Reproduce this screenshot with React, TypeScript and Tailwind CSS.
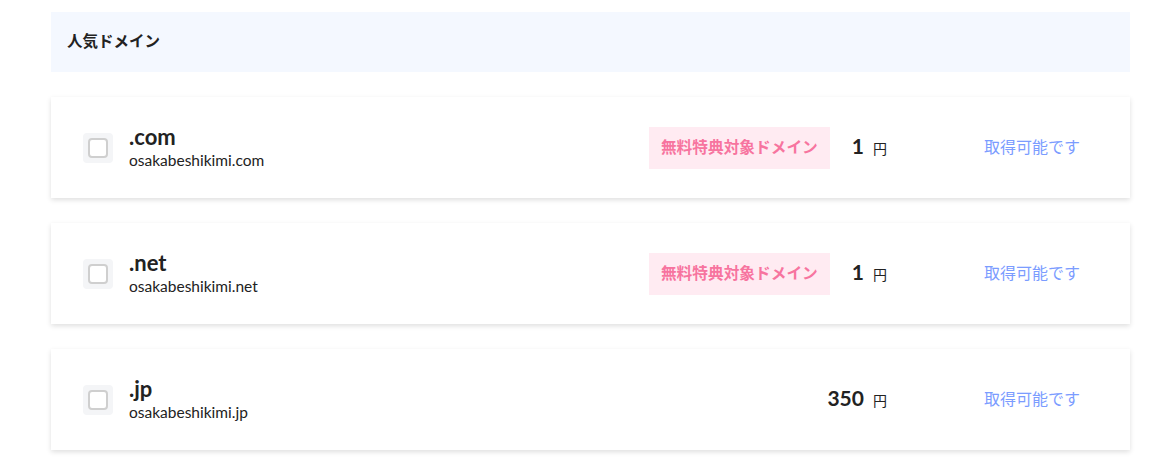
import { useState } from 'react'

type Domain = {
  tld: string
  name: string
  price: string
  free: boolean
}

const domains: Domain[] = [
  { tld: '.com', name: 'osakabeshikimi.com', price: '1', free: true },
  { tld: '.net', name: 'osakabeshikimi.net', price: '1', free: true },
  { tld: '.jp', name: 'osakabeshikimi.jp', price: '350', free: false },
]

function DomainRow({ d }: { d: Domain }) {
  const [checked, setChecked] = useState(false)
  return (
    <div className="flex h-[101px] items-center bg-white pl-8 pr-[50px] shadow-[0_2px_5px_rgba(0,0,0,0.13)]">
      {/* チェックボックス */}
      <button
        onClick={() => setChecked(!checked)}
        aria-label={d.tld}
        className="flex h-[30px] w-[30px] shrink-0 items-center justify-center rounded-[4px] bg-[#f4f5f7]"
      >
        <span
          className={`block h-[20px] w-[20px] rounded-[4px] border-2 ${checked ? 'border-[#7b9cff] bg-[#7b9cff]' : 'border-[#cfcfcf] bg-white'}`}
        />
      </button>
      <div className="ml-4 flex flex-1 flex-col pb-[2px]">
        <span className="text-[22px] font-bold leading-[25px] text-[#222]">{d.tld}</span>
        <span className="mt-[2px] text-[15.5px] leading-[19px] text-[#222]">{d.name}</span>
      </div>
      {d.free && (
        <span className="flex h-[42px] items-center bg-[#ffebf2] px-[12px] text-[15.7px] font-bold text-[#f7749f]">
          無料特典対象ドメイン
        </span>
      )}
      <div className="ml-[22px] flex items-baseline pb-[4px]">
        <span className="text-[21px] font-bold text-[#222]">{d.price}</span>
        <span className="ml-[9px] text-[14px] text-[#222]">円</span>
      </div>
      <span className="ml-[97px] pb-[2px] text-[16px] text-[#7b9cff]">取得可能です</span>
    </div>
  )
}

export default function App() {
  return (
    <div
      className="bg-white pl-[51px] pr-[30px] pt-[12px] pb-[18px]"
      style={{ fontFamily: 'Lato, "Noto Sans CJK JP", sans-serif' }}
    >
      <div className="flex h-[60px] items-center bg-[#f4f8ff] px-4">
        <span className="text-[15.5px] font-bold text-[#222]">人気ドメイン</span>
      </div>
      <div className="mt-[25px] flex flex-col gap-[25px]">
        {domains.map((d) => (
          <DomainRow key={d.tld} d={d} />
        ))}
      </div>
    </div>
  )
}
